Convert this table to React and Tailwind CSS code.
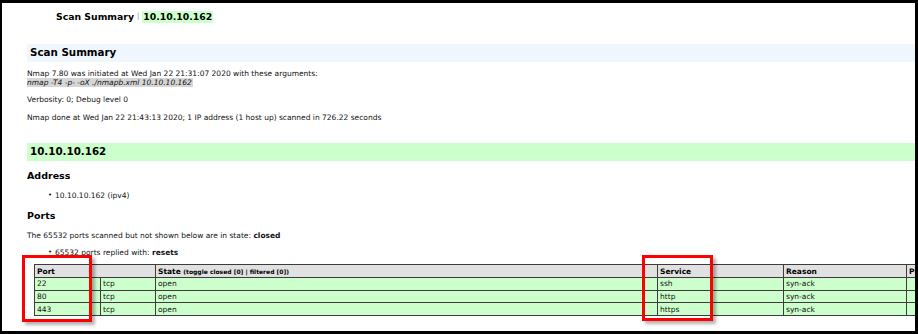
import React from 'react';

const ports = [
  { port: '22', proto: 'tcp', state: 'open', service: 'ssh', reason: 'syn-ack' },
  { port: '80', proto: 'tcp', state: 'open', service: 'http', reason: 'syn-ack' },
  { port: '443', proto: 'tcp', state: 'open', service: 'https', reason: 'syn-ack' },
];

function Bullet({ children }) {
  return (
    <div className="flex items-center pl-[21px] leading-[9px]">
      <span className="w-[7px] text-[7px]">•</span>
      <span>{children}</span>
    </div>
  );
}

export default function App() {
  const cell = 'border border-[#3c3c3c] px-[2px] h-[12.7px] leading-[11px] text-left align-middle';

  return (
    <div className="w-[918px] h-[334px] bg-black pt-[3px] pl-[2px] pr-[3px] pb-[3px]">
      <div
        className="relative h-full bg-white overflow-hidden text-[7.5px] text-[#111]"
        style={{ fontFamily: '"DejaVu Sans", Verdana, sans-serif' }}
      >
        {/* page title */}
        <div className="flex items-center pl-[54px] pt-[8px] h-[19px] text-[9.3px] font-bold text-black">
          <span>Scan Summary</span>
          <span className="px-[3px] text-[7px] font-normal text-[#888]">|</span>
          <span className="bg-[#ccffcc] px-[1px] leading-[12px]">10.10.10.162</span>
        </div>

        <div className="pl-[25px]">
          {/* scan summary */}
          <div className="mt-[22px] h-[18px] bg-[#eff6fe] pl-[3px] flex items-center text-[10.3px] font-bold text-black">
            Scan Summary
          </div>
          <div className="mt-[6.5px] leading-[9px]">
            <div>Nmap 7.80 was initiated at Wed Jan 22 21:31:07 2020 with these arguments:</div>
            <div className="italic bg-[#d6d6d6] w-[166px]">nmap -T4 -p- -oX ./nmapb.xml 10.10.10.162</div>
          </div>
          <div className="mt-[8.5px] leading-[9px]">Verbosity: 0; Debug level 0</div>
          <div className="mt-[8.5px] leading-[9px]">
            Nmap done at Wed Jan 22 21:43:13 2020; 1 IP address (1 host up) scanned in 726.22 seconds
          </div>

          {/* host */}
          <div className="mt-[21.5px] h-[18px] bg-[#ccffcc] pl-[3px] flex items-center text-[10.3px] font-bold text-black">
            10.10.10.162
          </div>
          <div className="mt-[8.7px] h-[12px] leading-[12px] text-[9.5px] font-bold text-black">Address</div>
          <div className="mt-[9px]">
            <Bullet>10.10.10.162 (ipv4)</Bullet>
          </div>
          <div className="mt-[10px] h-[12px] leading-[12px] text-[9.5px] font-bold text-black">Ports</div>
          <div className="mt-[9.5px] leading-[9px]">
            The 65532 ports scanned but not shown below are in state: <b>closed</b>
          </div>
          <div className="mt-[8px]">
            <Bullet>
              65532 ports replied with: <b>resets</b>
            </Bullet>
          </div>

          {/* ports table */}
          <table className="mt-[7px] ml-[7px] border-collapse border-t border-[#999] w-[1000px] table-fixed">
            <colgroup>
              <col className="w-[66px]" />
              <col className="w-[55px]" />
              <col className="w-[502px]" />
              <col className="w-[126px]" />
              <col className="w-[123px]" />
              <col />
            </colgroup>
            <thead>
              <tr className="bg-[#e1e1e1] font-bold text-black">
                <td className={cell} colSpan={2}>Port</td>
                <td className={cell}>
                  State <span className="text-[6px]">(toggle closed [0] | filtered [0])</span>
                </td>
                <td className={cell}>Service</td>
                <td className={cell}>Reason</td>
                <td className={cell}>Product</td>
              </tr>
            </thead>
            <tbody>
              {ports.map((p) => (
                <tr key={p.port} className="bg-[#ccffcc]">
                  <td className={cell}>{p.port}</td>
                  <td className={cell}>{p.proto}</td>
                  <td className={cell}>{p.state}</td>
                  <td className={cell}>{p.service}</td>
                  <td className={cell}>{p.reason}</td>
                  <td className={cell}></td>
                </tr>
              ))}
            </tbody>
          </table>
        </div>

        {/* highlight boxes */}
        <div className="absolute left-[20px] top-[252px] w-[70px] h-[67px] border-[3px] border-[#ff0000] shadow-[3px_3px_3px_rgba(0,0,0,0.3)]" />
        <div className="absolute left-[640px] top-[252px] w-[71px] h-[66px] border-[3px] border-[#ff0000] shadow-[3px_3px_3px_rgba(0,0,0,0.3)]" />
      </div>
    </div>
  );
}
